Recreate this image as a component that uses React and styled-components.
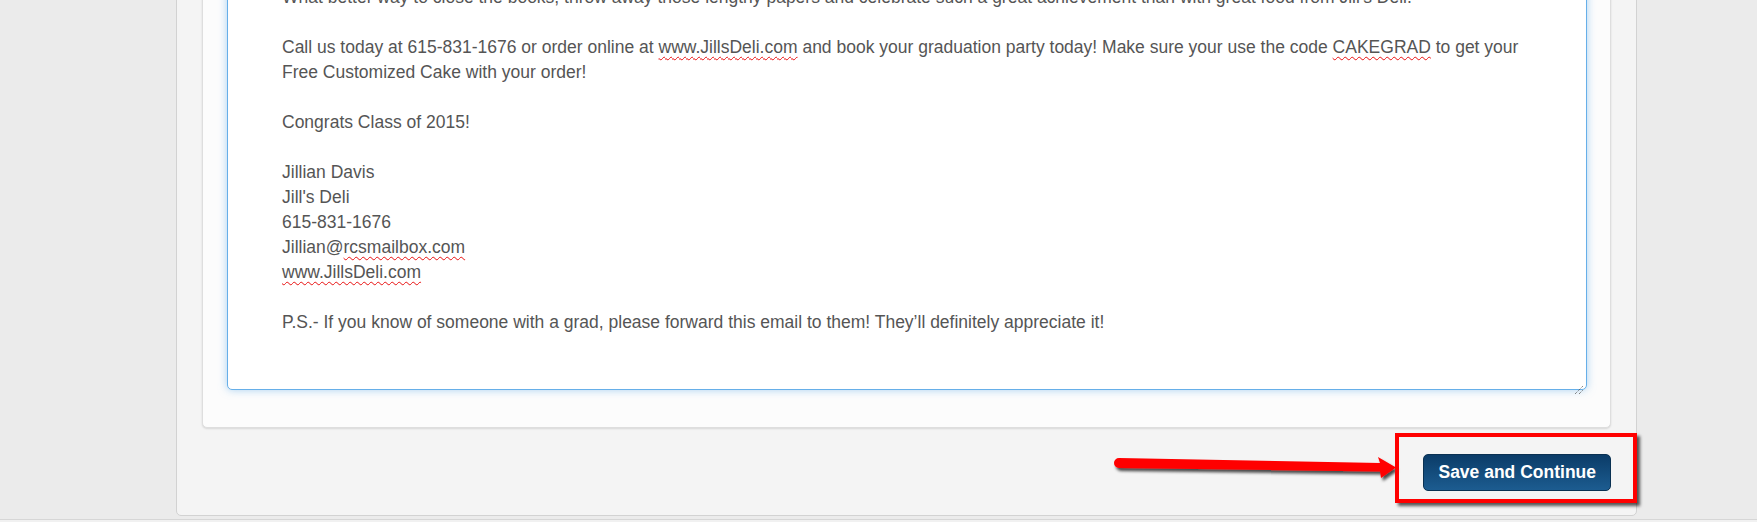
import React from 'react';
import styled, { createGlobalStyle } from 'styled-components';

const GlobalStyle = createGlobalStyle`
  html, body {
    margin: 0;
    padding: 0;
    background: #ebebeb;
    overflow: hidden;
  }
  body {
    font-family: "Liberation Sans", Arial, sans-serif;
  }
`;

const Screen = styled.div`
  height: 522px;
  overflow: hidden;
  background: #ebebeb;
  display: flex;
  flex-direction: column;
`;

const Main = styled.div`
  padding: 0 120px 0 176px;
`;

const Panel = styled.section`
  margin-top: -82px;
  background: #f4f4f4;
  border: 1px solid #d2d2d2;
  border-radius: 5px;
  padding-top: 20px;
`;

const Card = styled.div`
  margin: 0 25px;
  background: #fcfcfc;
  border: 1px solid #dedede;
  border-radius: 5px;
  box-shadow: 0 1px 2px rgba(0, 0, 0, 0.12);
  padding: 24px 23px 37px 24px;
`;

const EmailBody = styled.div`
  position: relative;
  background: #fff;
  border: 1px solid #66afe9;
  border-radius: 5px;
  box-shadow: inset 0 1px 1px rgba(0, 0, 0, 0.075), 0 0 8px rgba(102, 175, 233, 0.55);
  padding: 20px 40px 54px 54px;
  color: #555;
  font-size: 17.5px;
  line-height: 25px;
`;

const Line = styled.p`
  margin: 0;
  min-height: 25px;
`;

const Misspelled = styled.span`
  text-decoration: underline wavy #e81010;
  text-decoration-thickness: 1px;
  text-underline-offset: 3px;
`;

const ResizeGrip = styled.span`
  position: absolute;
  right: 2px;
  bottom: 2px;
  width: 10px;
  height: 10px;
  display: block;
`;

const Footer = styled.div`
  position: relative;
  display: flex;
  justify-content: flex-end;
  padding: 26px 25px 24px;
`;

const PrimaryButton = styled.button`
  font-family: "Liberation Sans", Arial, sans-serif;
  font-size: 17.5px;
  font-weight: bold;
  line-height: 25px;
  color: #fff;
  padding: 5px 14px;
  border: 1px solid #0a3152;
  border-radius: 5px;
  background: linear-gradient(to bottom, #0b3c68 0%, #1c5c90 100%);
  cursor: pointer;
`;

const Highlight = styled.div`
  position: absolute;
  top: 5px;
  right: -1px;
  width: 242px;
  height: 70px;
  box-sizing: border-box;
  border: 4px solid #ff0000;
  box-shadow: 3px 3px 3px rgba(0, 0, 0, 0.65);
  pointer-events: none;
`;

const Arrow = styled.svg`
  position: absolute;
  left: 928px;
  top: 22px;
  width: 300px;
  height: 36px;
  overflow: visible;
  pointer-events: none;
`;

const BottomEdge = styled.div`
  margin-top: auto;
  height: 2px;
  border-top: 1px solid #d6d6d6;
  background: #f1f1f1;
`;

const App = () => (
  <Screen>
    <GlobalStyle />
    <Main>
      <Panel>
        <Card>
          <EmailBody>
            <Line>What better way to close the books, throw away those lengthy papers and celebrate such a great achievement than with great food from Jill's Deli.</Line>
            <Line />
            <Line>
              Call us today at 615-831-1676 or order online at <Misspelled>www.JillsDeli.com</Misspelled> and book your graduation party today! Make sure your use the code <Misspelled>CAKEGRAD</Misspelled> to get your Free Customized Cake with your order!
            </Line>
            <Line />
            <Line>Congrats Class of 2015!</Line>
            <Line />
            <Line>Jillian Davis</Line>
            <Line>Jill's Deli</Line>
            <Line>615-831-1676</Line>
            <Line>Jillian@<Misspelled>rcsmailbox.com</Misspelled></Line>
            <Line><Misspelled>www.JillsDeli.com</Misspelled></Line>
            <Line />
            <Line>P.S.- If you know of someone with a grad, please forward this email to them! They’ll definitely appreciate it!</Line>
            <ResizeGrip>
              <svg width="10" height="10" viewBox="0 0 10 10">
                <path d="M1 9 L9 1 M5 9 L9 5" stroke="#555" strokeWidth="1" strokeDasharray="1 1" />
              </svg>
            </ResizeGrip>
          </EmailBody>
        </Card>
        <Footer>
          <Arrow viewBox="0 0 300 36">
            <defs>
              <filter id="arrowShadow" x="-5%" y="-50%" width="110%" height="200%">
                <feDropShadow dx="2" dy="3" stdDeviation="1.4" floodColor="#000" floodOpacity="0.7" />
              </filter>
            </defs>
            <path
              d="M14 8 L275 13 L273 7 L291 17.5 L276 28 L275 21.5 L14 18 A5 5 0 0 1 14 8 Z"
              fill="#ff0000"
              filter="url(#arrowShadow)"
            />
          </Arrow>
          <PrimaryButton type="button">Save and Continue</PrimaryButton>
          <Highlight />
        </Footer>
      </Panel>
    </Main>
    <BottomEdge />
  </Screen>
);

export default App;
